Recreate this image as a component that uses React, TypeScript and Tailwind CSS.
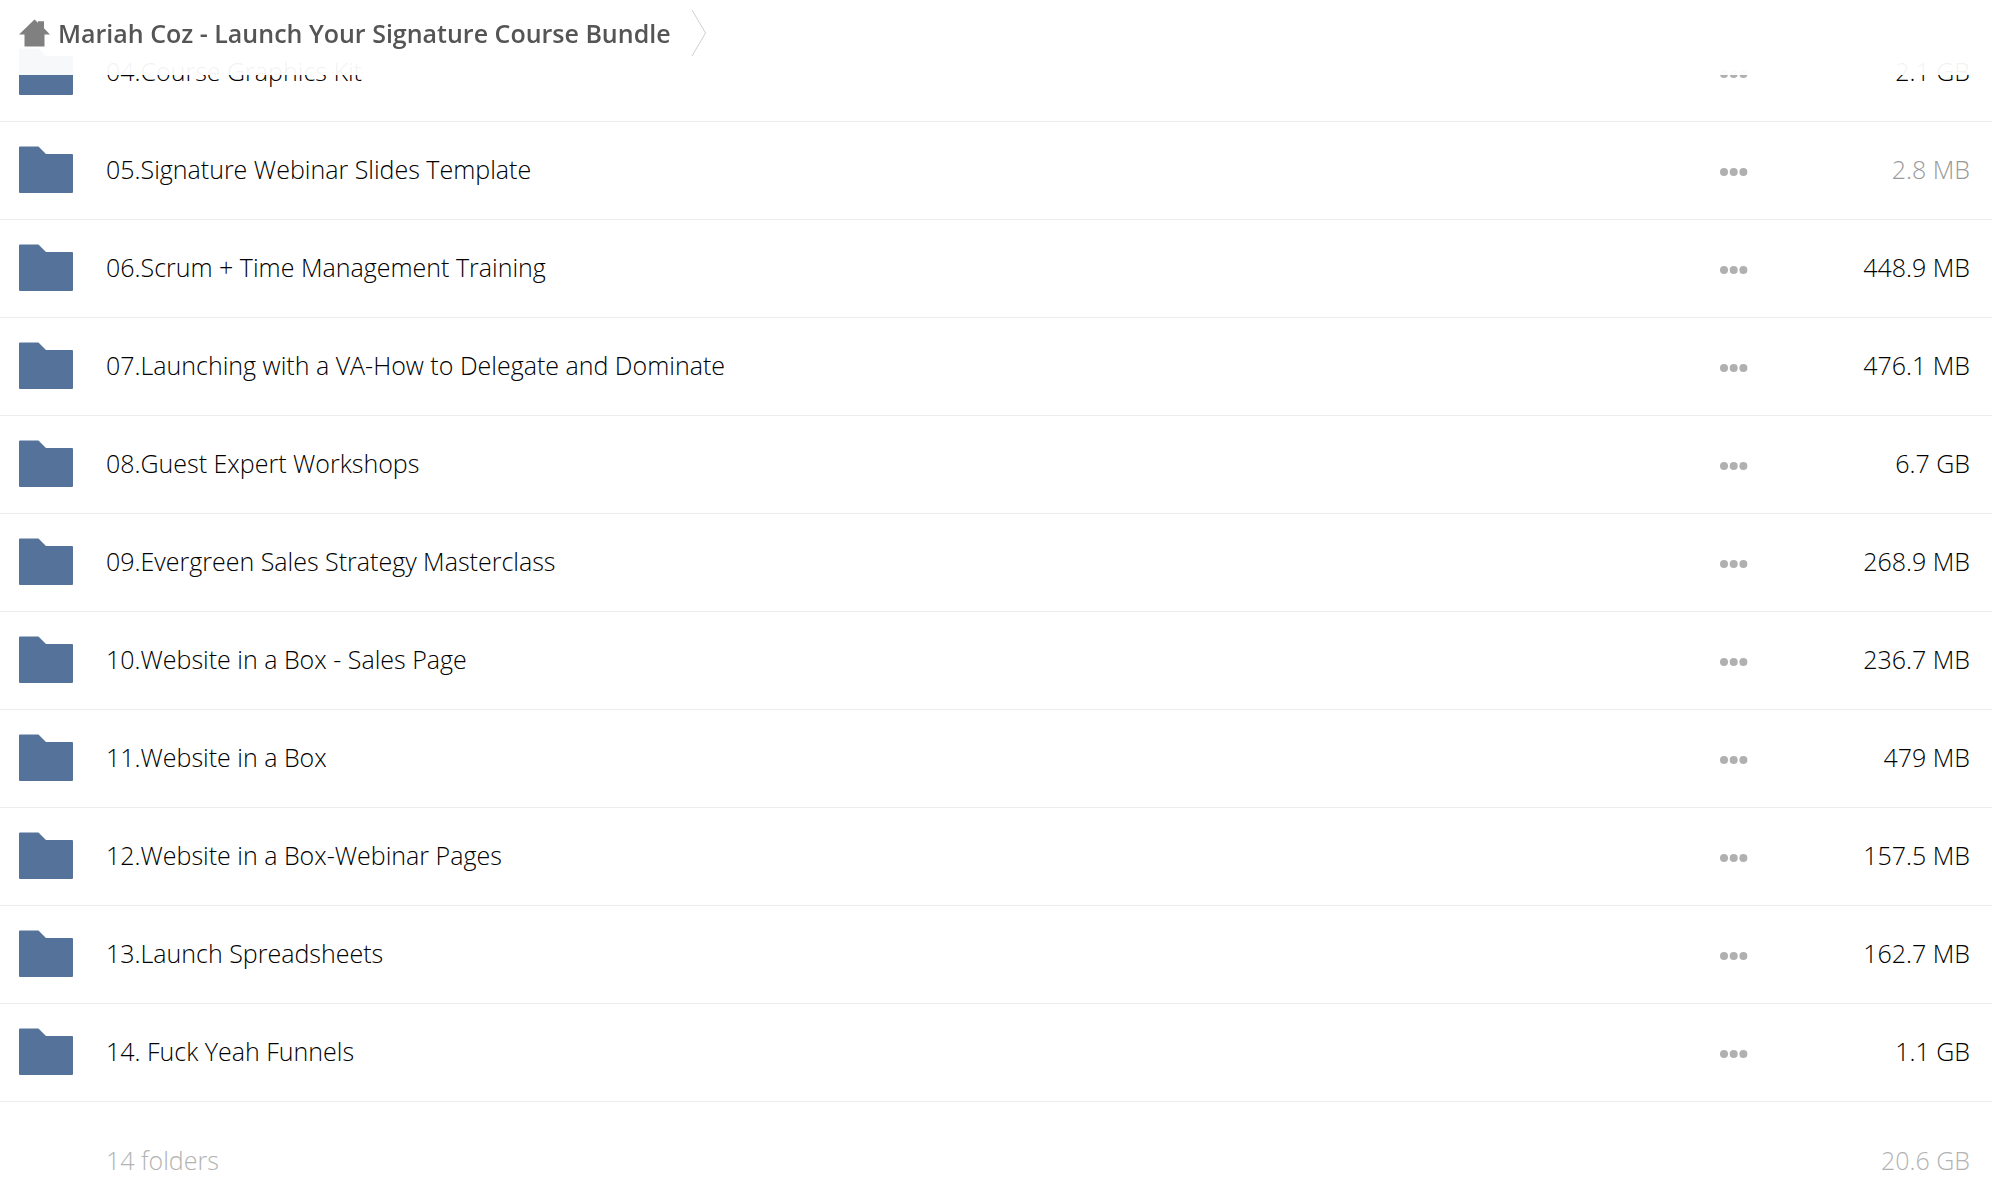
interface Folder {
  name: string;
  size: string;
  muted?: boolean;
}

const folders: Folder[] = [
  { name: '04.Course Graphics Kit', size: '2.1 GB' },
  { name: '05.Signature Webinar Slides Template', size: '2.8 MB', muted: true },
  { name: '06.Scrum + Time Management Training', size: '448.9 MB' },
  { name: '07.Launching with a VA-How to Delegate and Dominate', size: '476.1 MB' },
  { name: '08.Guest Expert Workshops', size: '6.7 GB' },
  { name: '09.Evergreen Sales Strategy Masterclass', size: '268.9 MB' },
  { name: '10.Website in a Box - Sales Page', size: '236.7 MB' },
  { name: '11.Website in a Box', size: '479 MB' },
  { name: '12.Website in a Box-Webinar Pages', size: '157.5 MB' },
  { name: '13.Launch Spreadsheets', size: '162.7 MB' },
  { name: '14. Fuck Yeah Funnels', size: '1.1 GB' },
];

function HomeIcon() {
  return (
    <svg width="31" height="28" viewBox="0 0 31 28" fill="#808080" aria-hidden="true">
      <path d="M15.5 0.5 19 3.8V2.3h6v7l6 6.2h-5.5V27.5h-20V15.5H0Z" />
    </svg>
  );
}

function FolderIcon() {
  return (
    <svg width="54" height="48" viewBox="0 0 54 48" fill="#54729a" aria-hidden="true">
      <path d="M1 0.5h18.5l7.5 7.5H53a1 1 0 0 1 1 1v37a1 1 0 0 1-1 1H1a1 1 0 0 1-1-1V1.5A1 1 0 0 1 1 0.5Z" />
    </svg>
  );
}

function DotsIcon() {
  return (
    <svg width="28" height="8" viewBox="0 0 28 8" fill="#b0b0b0" aria-hidden="true">
      <circle cx="4" cy="4" r="4" />
      <circle cx="13.7" cy="4" r="4" />
      <circle cx="23.4" cy="4" r="4" />
    </svg>
  );
}

function Breadcrumbs() {
  return (
    <header className="fixed inset-x-0 top-0 z-10 h-[75px] bg-white/95">
      <nav aria-label="Breadcrumb" className="flex h-[66px] items-center pl-[19px]">
        <a href="#" className="flex items-center gap-2 text-[25px] font-semibold text-[#555]">
          <HomeIcon />
          <span>Mariah Coz - Launch Your Signature Course Bundle</span>
        </a>
        <svg className="ml-5" width="16" height="48" viewBox="0 0 16 48" fill="none" stroke="#cfcfcf" aria-hidden="true">
          <path d="M1 1 14.5 24 1 47" />
        </svg>
      </nav>
    </header>
  );
}

function FolderRow({ name, size, muted }: Folder) {
  return (
    <tr className="h-[98px] border-b border-[#ececec]">
      <td className="pl-[19px]">
        <FolderIcon />
      </td>
      <td className="pb-0.5">
        <a href="#">{name}</a>
      </td>
      <td>
        <button type="button" aria-label={`Actions for ${name}`} className="flex h-8 w-7 items-center pt-1">
          <DotsIcon />
        </button>
      </td>
      <td className={`pr-[22px] pb-0.5 text-right ${muted ? 'text-[#999]' : ''}`}>{size}</td>
    </tr>
  );
}

export default function App() {
  return (
    <div className="min-h-screen overflow-hidden bg-white font-['Open_Sans',sans-serif] text-[25px] leading-8 font-light text-black">
      <Breadcrumbs />
      <main className="pt-[23px]">
        <table className="w-full table-fixed border-collapse">
          <colgroup>
            <col className="w-[106px]" />
            <col />
            <col className="w-[92px]" />
            <col className="w-[180px]" />
          </colgroup>
          <tbody>
            {folders.map((folder) => (
              <FolderRow key={folder.name} {...folder} />
            ))}
          </tbody>
          <tfoot>
            <tr className="h-[84px] text-[#b3b3b3]">
              <td />
              <td className="pt-[34px]">14 folders</td>
              <td />
              <td className="pt-[34px] pr-[22px] text-right">20.6 GB</td>
            </tr>
          </tfoot>
        </table>
      </main>
    </div>
  );
}
